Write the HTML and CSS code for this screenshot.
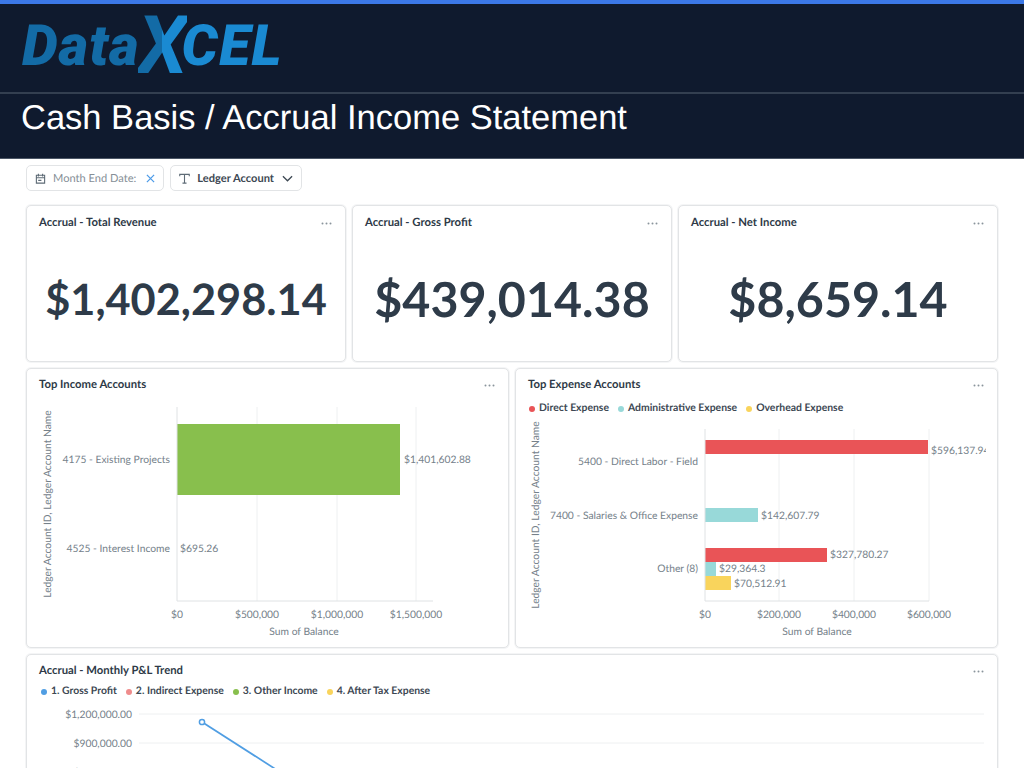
FILE: index.html
```html
<!DOCTYPE html>
<html lang="en">
<head>
    <meta charset="UTF-8">
    <title>Cash Basis / Accrual Income Statement</title>
    <link rel="stylesheet" href="styles.css">
</head>
<body>
    <!-- header -->
    <header class="header">
        <div class="logo-row">
            <div class="logo"><span class="logo-data">Data</span><span class="logo-x">X</span><span class="logo-cel">CEL</span></div>
        </div>
        <h1 class="page-title">Cash Basis / Accrual Income Statement</h1>
    </header>

    <!-- filters -->
    <div class="filters">
        <div class="filter">
            <svg class="filter-icon" viewBox="0 0 12 12"><path d="M1.5 2.5h9v8.5h-9zM1.5 5.2h9M3.7 .8v3M8.3 .8v3M3.5 8h3.5"/></svg>
            <span class="filter-label">Month End Date:</span>
            <svg class="filter-clear" viewBox="0 0 10 10"><path d="M1 1l8 8M9 1l-8 8"/></svg>
        </div>
        <div class="filter">
            <svg class="filter-icon" viewBox="0 0 12 12"><path d="M.8 3.5V1.5h10.4v2M6 1.5v9.5M3.8 11h4.4"/></svg>
            <span class="filter-label filter-label-strong">Ledger Account</span>
            <svg class="filter-chevron" viewBox="0 0 12 7"><path d="M1 1l5 5 5-5"/></svg>
        </div>
    </div>

    <main class="dashboard">
        <!-- number cards -->
        <div class="row row-numbers">
            <section class="card">
                <div class="card-head"><h2>Accrual - Total Revenue</h2><svg class="dots" viewBox="0 0 11 3"><circle cx="1.5" cy="1.5" r="1"/><circle cx="5.5" cy="1.5" r="1"/><circle cx="9.5" cy="1.5" r="1"/></svg></div>
                <div class="big-number big-number-long">$1,402,298.14</div>
            </section>
            <section class="card">
                <div class="card-head"><h2>Accrual - Gross Profit</h2><svg class="dots" viewBox="0 0 11 3"><circle cx="1.5" cy="1.5" r="1"/><circle cx="5.5" cy="1.5" r="1"/><circle cx="9.5" cy="1.5" r="1"/></svg></div>
                <div class="big-number">$439,014.38</div>
            </section>
            <section class="card">
                <div class="card-head"><h2>Accrual - Net Income</h2><svg class="dots" viewBox="0 0 11 3"><circle cx="1.5" cy="1.5" r="1"/><circle cx="5.5" cy="1.5" r="1"/><circle cx="9.5" cy="1.5" r="1"/></svg></div>
                <div class="big-number">$8,659.14</div>
            </section>
        </div>

        <!-- bar charts -->
        <div class="row row-charts">
            <section class="card">
                <div class="card-head"><h2>Top Income Accounts</h2><svg class="dots" viewBox="0 0 11 3"><circle cx="1.5" cy="1.5" r="1"/><circle cx="5.5" cy="1.5" r="1"/><circle cx="9.5" cy="1.5" r="1"/></svg></div>
                <!-- svg origin is the card's top left corner: page x-26, y-368 -->
                <svg class="chart" viewBox="0 0 483 279">
                    <line class="grid" x1="231" y1="39" x2="231" y2="233"/>
                    <line class="grid" x1="311" y1="39" x2="311" y2="233"/>
                    <line class="grid" x1="390" y1="39" x2="390" y2="233"/>
                    <rect class="bar-green" x="151" y="56" width="223" height="71"/>
                    <line class="axis" x1="151" y1="39" x2="151" y2="233"/>
                    <line class="axis" x1="151" y1="233" x2="407" y2="233"/>
                    <text class="axis-title" transform="translate(25 136) rotate(-90)">Ledger Account ID, Ledger Account Name</text>
                    <text class="tick end" x="144" y="95">4175 - Existing Projects</text>
                    <text class="tick end" x="144" y="184">4525 - Interest Income</text>
                    <text class="tick" x="378" y="95">$1,401,602.88</text>
                    <text class="tick" x="154" y="184">$695.26</text>
                    <text class="tick mid" x="151" y="250">$0</text>
                    <text class="tick mid" x="231" y="250">$500,000</text>
                    <text class="tick mid" x="311" y="250">$1,000,000</text>
                    <text class="tick mid" x="390" y="250">$1,500,000</text>
                    <text class="tick mid" x="278" y="267">Sum of Balance</text>
                </svg>
            </section>
            <section class="card">
                <div class="card-head"><h2>Top Expense Accounts</h2><svg class="dots" viewBox="0 0 11 3"><circle cx="1.5" cy="1.5" r="1"/><circle cx="5.5" cy="1.5" r="1"/><circle cx="9.5" cy="1.5" r="1"/></svg></div>
                <div class="legend legend-expense">
                    <span class="legend-item"><i class="dot dot-red"></i>Direct Expense</span>
                    <span class="legend-item"><i class="dot dot-teal"></i>Administrative Expense</span>
                    <span class="legend-item"><i class="dot dot-yellow"></i>Overhead Expense</span>
                </div>
                <!-- page x-515, y-368 -->
                <svg class="chart" viewBox="0 0 483 279">
                    <defs><clipPath id="plot-clip"><rect x="0" y="0" width="471" height="279"/></clipPath></defs>
                    <line class="grid" x1="264" y1="61" x2="264" y2="233"/>
                    <line class="grid" x1="339" y1="61" x2="339" y2="233"/>
                    <line class="grid" x1="414" y1="61" x2="414" y2="233"/>
                    <rect class="bar-red" x="190" y="72" width="223" height="14"/>
                    <rect class="bar-teal" x="190" y="140" width="53" height="14"/>
                    <rect class="bar-red" x="190" y="180" width="122" height="14"/>
                    <rect class="bar-teal" x="190" y="194" width="11" height="14"/>
                    <rect class="bar-yellow" x="190" y="208" width="26" height="14"/>
                    <line class="axis" x1="190" y1="61" x2="190" y2="233"/>
                    <line class="axis" x1="190" y1="233" x2="414" y2="233"/>
                    <text class="axis-title" transform="translate(24 147) rotate(-90)">Ledger Account ID, Ledger Account Name</text>
                    <text class="tick end" x="183" y="97">5400 - Direct Labor - Field</text>
                    <text class="tick end" x="183" y="151">7400 - Salaries &amp; Office Expense</text>
                    <text class="tick end" x="183" y="204">Other (8)</text>
                    <text class="tick" x="416" y="86" clip-path="url(#plot-clip)">$596,137.94</text>
                    <text class="tick" x="246" y="151">$142,607.79</text>
                    <text class="tick" x="315" y="190">$327,780.27</text>
                    <text class="tick" x="204" y="204">$29,364.3</text>
                    <text class="tick" x="219" y="219">$70,512.91</text>
                    <text class="tick mid" x="190" y="250">$0</text>
                    <text class="tick mid" x="264" y="250">$200,000</text>
                    <text class="tick mid" x="339" y="250">$400,000</text>
                    <text class="tick mid" x="414" y="250">$600,000</text>
                    <text class="tick mid" x="302" y="267">Sum of Balance</text>
                </svg>
            </section>
        </div>

        <!-- trend, runs off the bottom of the window -->
        <section class="card card-trend">
            <div class="card-head"><h2>Accrual - Monthly P&amp;L Trend</h2><svg class="dots" viewBox="0 0 11 3"><circle cx="1.5" cy="1.5" r="1"/><circle cx="5.5" cy="1.5" r="1"/><circle cx="9.5" cy="1.5" r="1"/></svg></div>
            <div class="legend legend-trend">
                <span class="legend-item"><i class="dot dot-blue"></i>1. Gross Profit</span>
                <span class="legend-item"><i class="dot dot-pink"></i>2. Indirect Expense</span>
                <span class="legend-item"><i class="dot dot-green"></i>3. Other Income</span>
                <span class="legend-item"><i class="dot dot-yellow"></i>4. After Tax Expense</span>
            </div>
            <!-- page x-26, y-654 -->
            <svg class="chart" viewBox="0 0 972 200">
                <line class="grid" x1="113" y1="60" x2="958" y2="60"/>
                <line class="grid" x1="113" y1="89" x2="958" y2="89"/>
                <line class="grid" x1="113" y1="118" x2="958" y2="118"/>
                <polyline class="trend-line" points="176,68 254,118"/>
                <circle class="trend-point" cx="176" cy="68" r="2.6"/>
                <text class="tick end" x="106" y="64">$1,200,000.00</text>
                <text class="tick end" x="106" y="93">$900,000.00</text>
                <text class="tick end" x="106" y="122">$600,000.00</text>
            </svg>
        </section>
    </main>
</body>
</html>
```

FILE: styles.css
```css
* {
    margin: 0;
    padding: 0;
    box-sizing: border-box;
}

html, body {
    height: 768px;
    overflow: hidden;
}

body {
    font-family: 'Lato', 'Liberation Sans', sans-serif;
    background: #ffffff;
    color: #2e3a47;
    text-rendering: geometricPrecision;
}

/* header */
.header {
    height: 159px;
    background: #0f1a2e;
    border-top: 4px solid #3b78e7;
    border-bottom: 1px solid #4b5666;
}

.logo-row {
    height: 90px;
    border-bottom: 2px solid #333f50;
    padding-left: 22px;
    overflow: hidden;
}

.logo {
    display: flex;
    align-items: baseline;
    font-family: 'Roboto', 'Liberation Sans', sans-serif;
    font-style: italic;
    font-weight: 900;
    font-size: 57px;
    line-height: 68px;
    height: 68px;
}

.logo-data {
    color: #136ba6;
    letter-spacing: 1px;
}

/* the X hangs below the baseline and lies over its neighbours */
.logo-x {
    position: relative;
    top: 8px;
    font-size: 81px;
    font-weight: 700;
    line-height: 68px;
    margin: 0 -6px 0 -2px;
    background: linear-gradient(90deg, #136ba6 50%, #1a8ad2 50%);
    -webkit-background-clip: text;
    background-clip: text;
    color: transparent;
}

.logo-cel {
    color: #1a8ad2;
    letter-spacing: 1.5px;
}

.page-title {
    font-family: 'Liberation Sans', sans-serif;
    font-weight: 400;
    font-size: 34.5px;
    line-height: 48px;
    color: #ffffff;
    padding: 0 0 0 21px;
}

/* filters */
.filters {
    display: flex;
    gap: 6px;
    padding: 6px 26px 0;
    height: 46px;
}

.filter {
    display: flex;
    align-items: center;
    height: 26px;
    padding: 0 8px;
    border: 1px solid #e2e4e6;
    border-radius: 5px;
    font-size: 11.1px;
}

.filter-icon {
    width: 11px;
    height: 11px;
    margin-right: 7px;
    fill: none;
    stroke: #5e6b76;
    stroke-width: 1.2;
}

.filter-label {
    color: #868f97;
}

.filter-label-strong {
    color: #3d4853;
    font-weight: 700;
}

.filter-clear {
    width: 9px;
    height: 9px;
    margin-left: 10px;
    fill: none;
    stroke: #4c9be8;
    stroke-width: 1.4;
}

.filter-chevron {
    width: 11px;
    height: 7px;
    margin-left: 8px;
    fill: none;
    stroke: #3d4853;
    stroke-width: 1.4;
}

/* dashboard grid */
.dashboard {
    display: flex;
    flex-direction: column;
    gap: 6px;
    padding: 0 26px;
}

.row {
    display: grid;
    gap: 6px;
}

.row-numbers {
    grid-template-columns: repeat(3, 1fr);
    height: 157px;
}

.row-charts {
    grid-template-columns: 1fr 1fr;
    height: 280px;
}

.card {
    position: relative;
    background: #ffffff;
    border: 1px solid #e2e4e6;
    border-radius: 5px;
    box-shadow: 0 0 0 1px #f4f5f6;
    overflow: hidden;
}

.card-trend {
    height: 200px;
}

.card-head {
    display: flex;
    justify-content: space-between;
    align-items: center;
    padding: 9px 13px 0 12px;
}

.row-numbers .card-head {
    padding-top: 10px;
}

.card-head h2 {
    font-size: 11.3px;
    line-height: 14px;
    font-weight: 700;
    color: #2e3a47;
}

.dots {
    width: 11px;
    height: 3px;
    fill: #8a949c;
}

.big-number {
    font-size: 48.4px;
    font-weight: 700;
    line-height: 56px;
    text-align: center;
    color: #2e3b49;
    margin-top: 41px;
}

.big-number-long {
    font-size: 43.3px;
}

/* charts */
.chart {
    position: absolute;
    left: -1px;
    top: -1px;
    width: 483px;
    height: 279px;
}

.card-trend .chart {
    width: 972px;
    height: 200px;
}

.grid {
    stroke: #eef0f1;
    stroke-width: 1;
}

.axis {
    stroke: #dfe2e4;
    stroke-width: 1;
}

.tick, .axis-title {
    font-size: 10.3px;
    fill: #75818a;
}

.end {
    text-anchor: end;
}

.mid {
    text-anchor: middle;
}

.axis-title {
    text-anchor: middle;
}

.bar-green {
    fill: #88bf4d;
}

.bar-red {
    fill: #e95457;
}

.bar-teal {
    fill: #98d9d9;
}

.bar-yellow {
    fill: #f9d45c;
}

.trend-line {
    fill: none;
    stroke: #509ee3;
    stroke-width: 1.7;
}

.trend-point {
    fill: #ffffff;
    stroke: #509ee3;
    stroke-width: 1.5;
}

/* legends */
.legend {
    display: flex;
    gap: 9px;
    padding-left: 13px;
    font-size: 10.4px;
    line-height: 13px;
    font-weight: 700;
    color: #3d4853;
    margin-top: 10px;
}

.legend-trend {
    gap: 9px;
    padding-left: 14px;
    margin-top: 7px;
}

.legend-item {
    display: flex;
    align-items: center;
    white-space: nowrap;
}

.dot {
    width: 6px;
    height: 6px;
    border-radius: 50%;
    margin-right: 4px;
}

.dot-red {
    background: #e95457;
}

.dot-teal {
    background: #98d9d9;
}

.dot-yellow {
    background: #f9d45c;
}

.dot-blue {
    background: #509ee3;
}

.dot-pink {
    background: #ef8c8c;
}

.dot-green {
    background: #88bf4d;
}
```
